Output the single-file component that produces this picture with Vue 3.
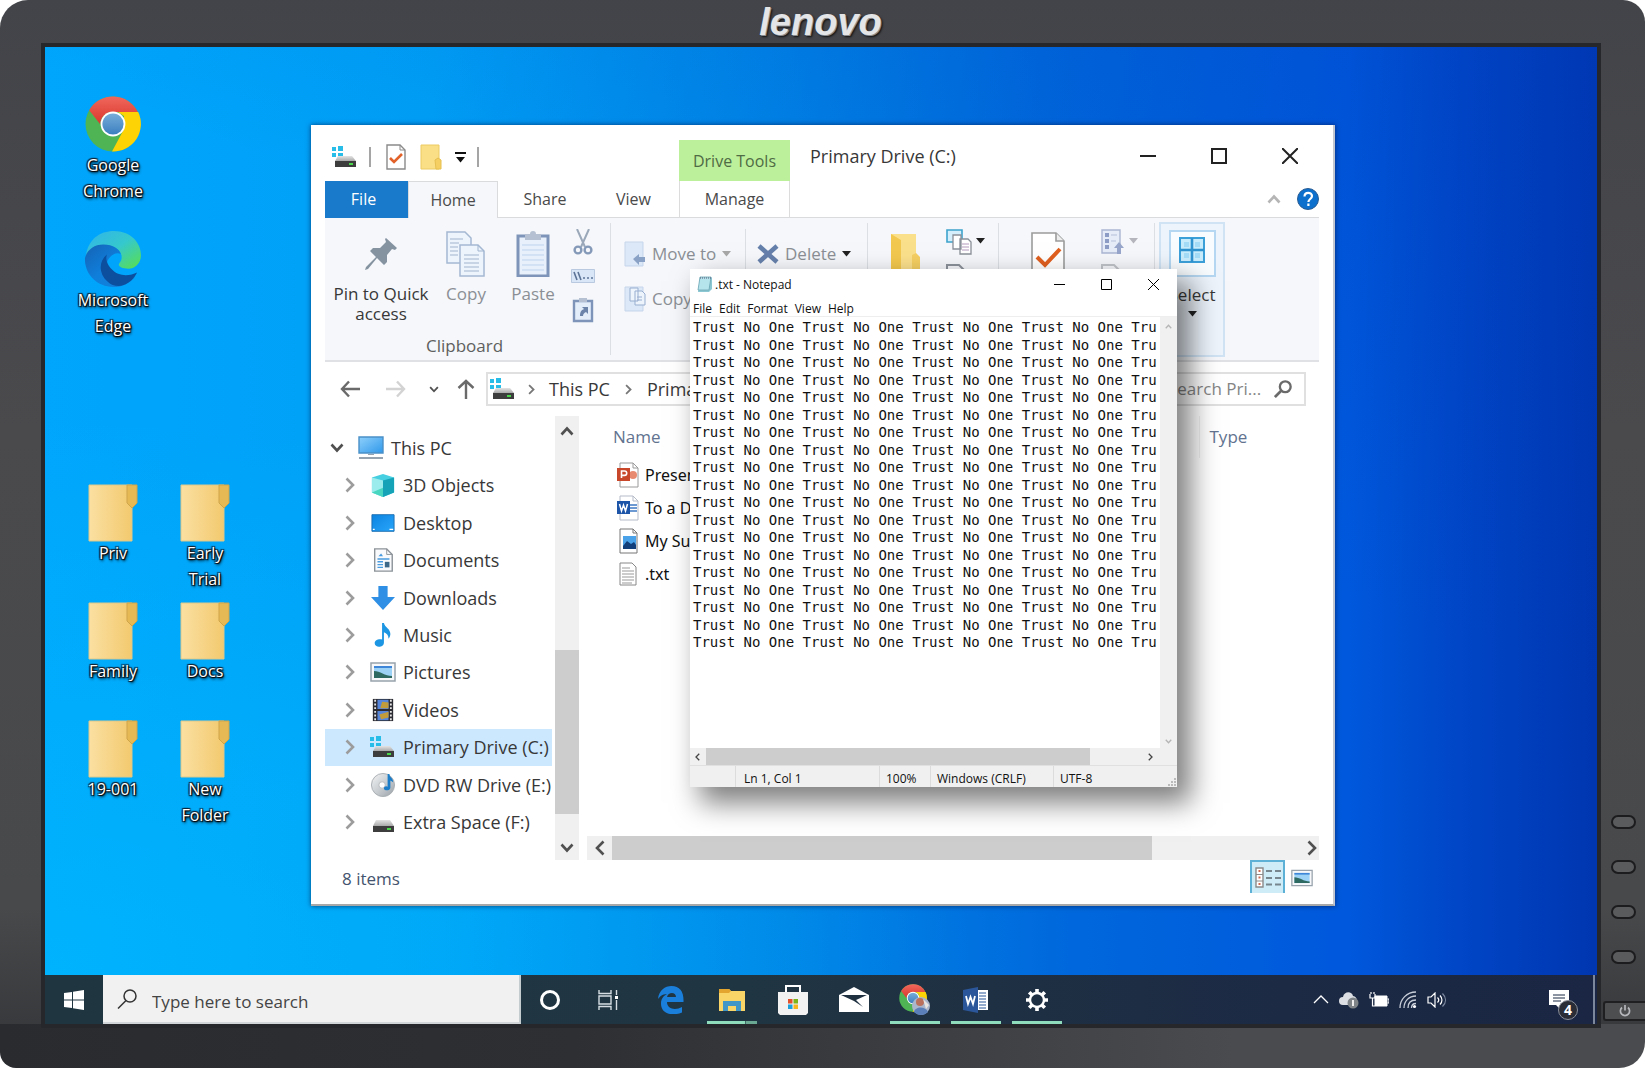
<script setup>
import { ref } from 'vue'

const shortcuts = [
  { label: 'Google\nChrome', icon: 'chrome' },
  { label: 'Microsoft\nEdge', icon: 'edge-new' },
]
const folders = ['Priv', 'Early\nTrial', 'Family', 'Docs', '19-001', 'New\nFolder']

const tree = [
  { label: 'This PC', icon: 'pc', root: true },
  { label: '3D Objects', icon: 'cube' },
  { label: 'Desktop', icon: 'desk' },
  { label: 'Documents', icon: 'docs' },
  { label: 'Downloads', icon: 'down' },
  { label: 'Music', icon: 'music' },
  { label: 'Pictures', icon: 'picture' },
  { label: 'Videos', icon: 'video' },
  { label: 'Primary Drive (C:)', icon: 'drive-win', active: true },
  { label: 'DVD RW Drive (E:)', icon: 'dvd' },
  { label: 'Extra Space (F:)', icon: 'drive' },
]

const files = [
  { name: 'Presentation', icon: 'f-ppt' },
  { name: 'To a Document', icon: 'f-word' },
  { name: 'My Summer', icon: 'f-img' },
  { name: '.txt', icon: 'f-txt' },
]

const line = 'Trust No One '.repeat(6).trim()
const note = ref(Array(19).fill(line).join('\n'))
const query = ref('')
const webQuery = ref('')

const apps = [
  { id: 'edge-old', name: 'Microsoft Edge' },
  { id: 'explorer', name: 'File Explorer', running: true, stacked: true },
  { id: 'store', name: 'Microsoft Store' },
  { id: 'mail', name: 'Mail' },
  { id: 'chrome-user', name: 'Google Chrome', running: true },
  { id: 'word', name: 'Word', running: true },
  { id: 'gear', name: 'Settings', running: true },
]
</script>

<template>
  <svg class="sprite" aria-hidden="true">
    <defs>
      <linearGradient id="gFolder" x1="0" x2="1" y1="0" y2="0"><stop offset="0" stop-color="#fbe0a2" /><stop offset="1" stop-color="#f2c96e" /></linearGradient>
      <linearGradient id="gRed" x1="0" x2="0" y1="0" y2="1"><stop offset="0" stop-color="#f0675c" /><stop offset="1" stop-color="#d9362b" /></linearGradient>
      <linearGradient id="gBlue" x1="0" x2="0" y1="0" y2="1"><stop offset="0" stop-color="#77add9" /><stop offset="1" stop-color="#3b7fc0" /></linearGradient>
      <linearGradient id="gTeal" x1="0" x2="1" y1="0" y2="1"><stop offset="0" stop-color="#2fb4ec" /><stop offset="0.5" stop-color="#35c8cd" /><stop offset="1" stop-color="#5be04a" /></linearGradient>
      <linearGradient id="gEdgeL" x1="0" x2="1" y1="0" y2="1"><stop offset="0" stop-color="#1563b4" /><stop offset="0.5" stop-color="#0f7fdc" /><stop offset="1" stop-color="#1180d8" /></linearGradient>
      <linearGradient id="gScreen" x1="0" x2="1" y1="0" y2="1"><stop offset="0" stop-color="#8fd0fb" /><stop offset="1" stop-color="#2f98ea" /></linearGradient>
      <linearGradient id="gDesk" x1="0" x2="1" y1="0" y2="1"><stop offset="0" stop-color="#0b83e0" /><stop offset="1" stop-color="#2aa6fb" /></linearGradient>
      <linearGradient id="gDrive" x1="0" x2="0" y1="0" y2="1"><stop offset="0" stop-color="#e4e4e4" /><stop offset="1" stop-color="#a9a9a9" /></linearGradient>
      <linearGradient id="gDisc" x1="0" x2="1" y1="0" y2="1"><stop offset="0" stop-color="#f4f4f4" /><stop offset="0.5" stop-color="#c9ced2" /><stop offset="1" stop-color="#9aa2a8" /></linearGradient>
    </defs>

    <symbol id="chrome" viewBox="0 0 56 56">
      <circle cx="28" cy="28" r="27.5" fill="#4fb454" />
      <path d="M4.2 14.2A27.5 27.5 0 0 1 52.8 16H28a12 12 0 0 0-12.6 12.5z" fill="url(#gRed)" />
      <path d="M53.2 16A27.5 27.5 0 0 1 27 55.4L38.5 34 39 20 33 16z" fill="#fdd305" />
      <circle cx="28" cy="28" r="12.4" fill="#fff" /><circle cx="28" cy="28" r="10.6" fill="url(#gBlue)" />
    </symbol>
    <symbol id="edge-new" viewBox="0 0 58 58">
      <path d="M1 26C3 9 15 0 30 0c17 0 28 12 28 25 0 9-7 14-13 14-6 0-10-2-10-4 0-2 3-3 3-8 0-6-6-11-14-12C14 14 5 18 1 26z" fill="url(#gTeal)" />
      <path d="M0 28C2 20 9 14 19 14c10 0 17 5 18 10-3-2-7-1-10 2-7 6-6 17 2 23 7 5 17 3 23-2C47 54 39 58 29 58 12 58-1 44 0 28z" fill="url(#gEdgeL)" />
      <path d="M23 24c-9 7-9 20 0 28 5 5 12 6 17 4 6-2 11-7 14-13-8 4-20 4-26-3-6-6-7-13-5-16z" fill="#0c4f9e" />
    </symbol>
    <symbol id="folder-big" viewBox="0 0 50 58">
      <path d="M1 1h43v56H1z" fill="url(#gFolder)" stroke="#dcc88c" stroke-width="1" />
      <path d="M39 1h10v18l-5 5-5-5z" fill="#e6b954" stroke="#cfa54a" stroke-width="1" />
    </symbol>

    <symbol id="drive-win" viewBox="0 0 26 22">
      <path d="M0 1h4v4H0zM6 0h5v5H6zM0 7h4v4H0zM6 7h5v4H6z" fill="#28bce8" />
      <path d="M6 10h14l4 5H3z" fill="url(#gDrive)" /><path d="M3 15h21v6H3z" fill="#3d3d3d" /><path d="M17 17h4v2h-4z" fill="#4ad84a" />
    </symbol>
    <symbol id="drive" viewBox="0 0 26 22">
      <path d="M6 9h14l4 6H3z" fill="url(#gDrive)" /><path d="M3 15h21v6H3z" fill="#3d3d3d" /><path d="M17 17h4v2h-4z" fill="#4ad84a" />
    </symbol>
    <symbol id="doc-check" viewBox="0 0 20 26">
      <path d="M1 1h13l5 5v19H1z" fill="#fff" stroke="#8a8a8a" stroke-width="1.4" /><path d="M14 1v5h5" fill="none" stroke="#8a8a8a" />
      <path d="M4 14l4 4 8-8" fill="none" stroke="#e2622a" stroke-width="2.6" />
    </symbol>
    <symbol id="folder-s" viewBox="0 0 22 26">
      <path d="M1 1h18v24H1z" fill="#fbdf87" stroke="#eccb62" /><path d="M15 16l3-2 3 2v9h-5z" fill="#f6cf62" stroke="#e6c050" />
    </symbol>
    <symbol id="pin" viewBox="0 0 32 33">
      <path d="M21 0l11 10-2 2-3-1-5 6 0 7-3 3-7-7-9 11-3 1 1-3 10-10-6-6 3-3 7 0 6-6-1-3z" fill="#8593a1" />
    </symbol>
    <symbol id="copy" viewBox="0 0 40 46">
      <g fill="#eef4fc" stroke="#a5b8d2" stroke-width="1.5">
        <path d="M1 1h18l6 6v25H1z" /><path d="M14 14h18l6 6v25H14z" />
      </g>
      <path d="M4 8h13M4 12h9M4 16h8M4 20h8M4 24h8M18 24h15M18 28h15M18 32h15M18 36h15M18 40h15M32 14v6h6" stroke="#9fb4d0" fill="none" />
    </symbol>
    <symbol id="paste" viewBox="0 0 34 46">
      <path d="M2 5h30v40H2z" fill="#e8f0fb" stroke="#7e94b8" stroke-width="3" /><path d="M9 3h5a3 3 0 0 1 6 0h5v6H9z" fill="#b5c1d2" />
      <path d="M6 14h22M6 19h22M6 24h22M6 29h22M6 34h22M6 39h22" stroke="#bfd3ef" />
    </symbol>
    <symbol id="cut" viewBox="0 0 20 26">
      <path d="M4 0l8 18M16 0L8 18" stroke="#9aa8ba" stroke-width="2" /><g fill="none" stroke="#8499b8" stroke-width="2.4"><circle cx="5" cy="21" r="3.4" /><circle cx="15" cy="21" r="3.4" /></g>
    </symbol>
    <symbol id="path" viewBox="0 0 24 14">
      <path d="M.5.5h23v13H.5z" fill="#d8e6f8" stroke="#b8c9e0" /><path d="M3 3l3 8M7 3l3 8M12 9h2M16 9h2M20 9h2" stroke="#5c7396" stroke-width="1.6" />
    </symbol>
    <symbol id="shortcut" viewBox="0 0 22 26">
      <path d="M2 4h18v20H2z" fill="#e4eefb" stroke="#7e94b8" stroke-width="2.4" /><path d="M7 1h8v4H7z" fill="#b5c1d2" /><path d="M8 19c0-5 2-6 4-7l-2-2h6v7l-2-2c-2 1-3 2-3 4z" fill="#6c84aa" />
    </symbol>
    <symbol id="move" viewBox="0 0 22 26">
      <path d="M1 1h18v24H1z" fill="#dce8f8" stroke="#c5d5ea" /><path d="M9 18l6-5v3h6v5h-6v3z" fill="#8aa2c6" />
    </symbol>
    <symbol id="copyto" viewBox="0 0 22 26">
      <path d="M1 1h18v24H1z" fill="#dce8f8" stroke="#c5d5ea" /><path d="M6 2h8v13H6zM11 5h7l3 3v11H11z" fill="#eef4fc" stroke="#98aed0" /><path d="M13 11h5M13 14h5" stroke="#98aed0" />
    </symbol>
    <symbol id="cross" viewBox="0 0 22 20"><path d="M2 2l18 16M20 2L2 18" stroke="#6680ac" stroke-width="4.6" /></symbol>
    <symbol id="newfolder" viewBox="0 0 30 60">
      <path d="M1 1h25v58H1z" fill="#fbe08c" /><path d="M1 1l10 6v52H1z" fill="#f3c84e" /><path d="M22 22l4-2 4 4v35h-8z" fill="#f5cf62" />
    </symbol>
    <symbol id="newitem" viewBox="0 0 26 26">
      <path d="M1 1h15v12H1z" fill="#d5f0fc" stroke="#3da3cc" stroke-width="1.6" /><path d="M7 6h8v14H7zM14 10h8l3 3v12H14z" fill="#fff" stroke="#8a9099" stroke-width="1.3" /><path d="M16 15h7M16 18h7M16 21h7" stroke="#b49ac0" />
    </symbol>
    <symbol id="easy" viewBox="0 0 22 20"><path d="M1 7V2h12l6 6v12" fill="none" stroke="#8c929a" stroke-width="2" /><path d="M4 8h8v8H4z" fill="#b9c2cc" /></symbol>
    <symbol id="props" viewBox="0 0 34 46">
      <path d="M1 1h24l8 8v36H1z" fill="#fff" stroke="#9c9c9c" stroke-width="1.6" /><path d="M25 1v8h8" fill="#eee" stroke="#9c9c9c" stroke-width="1.6" /><path d="M6 25l8 8 15-16" fill="none" stroke="#e0601f" stroke-width="4" />
    </symbol>
    <symbol id="open" viewBox="0 0 24 26">
      <path d="M1 1h18v23H1z" fill="#e6ecf8" stroke="#aab6d2" stroke-width="1.4" /><path d="M4 4h4v4H4zM4 10h4v4H4zM4 16h4v4H4z" fill="#8c9cc4" /><path d="M10 6h6M10 12h5" stroke="#b5c0da" /><path d="M13 19l5-6 5 6h-3v6h-4v-6z" fill="#97a6ca" />
    </symbol>
    <symbol id="tiles" viewBox="0 0 26 26">
      <path d="M1 1h24v24H1z" fill="#c9ecfd" stroke="#3b9fd8" stroke-width="2" /><path d="M13 1v24M1 13h24" stroke="#2f93d0" stroke-width="2.6" />
      <path d="M5 5h5v5H5zM16 5h5v5h-5zM5 16h5v5H5zM16 16h5v5h-5z" fill="#a4dcf8" />
    </symbol>
    <symbol id="help" viewBox="0 0 22 22">
      <circle cx="11" cy="11" r="10.5" fill="#0c70cc" stroke="#2a5c94" /><path d="M7.5 8.5C7.5 3.5 15 4 15 8c0 3-3.6 3-3.600 6M11.400 15.600v2.400" stroke="#fff" stroke-width="2.200" fill="none" />
    </symbol>
    <symbol id="chev-r" viewBox="0 0 10 16"><path d="M1.500 1.500L8 8l-6.500 6.500" fill="none" stroke="currentColor" stroke-width="2.600" /></symbol>
    <symbol id="chev-d" viewBox="0 0 14 10"><path d="M1.500 1.500L7 7.500l5.500-6" fill="none" stroke="currentColor" stroke-width="2.600" /></symbol>
    <symbol id="arrow" viewBox="0 0 20 18"><path d="M9 1.500L2 9l7 7.500M2 9h18" fill="none" stroke="currentColor" stroke-width="2.400" /></symbol>
    <symbol id="tri" viewBox="0 0 9 6"><path d="M0 0h9L4.500 5.500z" fill="currentColor" /></symbol>
    <symbol id="lens" viewBox="0 0 20 20"><circle cx="12.500" cy="7.500" r="6" fill="none" stroke="currentColor" stroke-width="2.600" /><path d="M8 12l-7 7" stroke="currentColor" stroke-width="3" /></symbol>
    <symbol id="lens-thin" viewBox="0 0 20 20"><circle cx="13" cy="7" r="6" fill="none" stroke="currentColor" stroke-width="1.500" /><path d="M9 11.500l-8 8" stroke="currentColor" stroke-width="1.500" /></symbol>

    <symbol id="pc" viewBox="0 0 26 24"><path d="M1 1h24v16H1z" fill="url(#gScreen)" stroke="#4a90c8" stroke-width="1.400" /><path d="M10 18h6v1h-6zM1 21h24v2H1z" fill="#95a3b0" /></symbol>
    <symbol id="cube" viewBox="0 0 26 26"><path d="M1 5l12-4 12 4v16l-12 5-12-5z" fill="#46cfe0" /><path d="M1 5l12 3v18L1 21z" fill="#9becec" /><path d="M13 8l12-3v16l-12 5z" fill="#15a3b8" /><path d="M1 21l12-5 0 10z" fill="#48d6c0" /></symbol>
    <symbol id="desk" viewBox="0 0 26 26"><path d="M1 4h24v18H1z" fill="url(#gDesk)" stroke="#1c6cb0" /><path d="M2 20h2M20 20h4" stroke="#fff" stroke-width="1.400" /></symbol>
    <symbol id="docs" viewBox="0 0 26 26"><path d="M4 1h13l6 6v18H4z" fill="#f8fafc" stroke="#8b9298" stroke-width="1.500" /><path d="M17 1v6h6" fill="none" stroke="#8b9298" /><path d="M8 9l3-3 2 3z" fill="#4a9ce0" /><path d="M7 12h13M7 15h6M7 18h6M7 21h6" stroke="#4a9ce0" stroke-width="1.600" /><path d="M15 15h5v6h-5z" fill="#3e6888" /></symbol>
    <symbol id="down" viewBox="0 0 26 26"><path d="M8 0h10v12h8L13 26 0 12h8z" fill="#2f8fe4" /></symbol>
    <symbol id="music" viewBox="0 0 26 26"><path d="M12 0h2c1 5 7 6 7 12 0 2-1 4-2 5 0-4-2-6-5-7v11c0 6-10 6-10 1 0-4 5-5 8-4z" fill="#1c96e2" /></symbol>
    <symbol id="picture" viewBox="0 0 26 20"><path d="M1 1h24v18H1z" fill="#f6f8fa" stroke="#98a2ac" stroke-width="1.500" /><path d="M4 4h18v12H4z" fill="#9cd2f5" /><path d="M4 4h18v2H4z" fill="#3d86d8" /><path d="M4 9c6 0 11 5 18 5v2H4z" fill="#2f6a62" /></symbol>
    <symbol id="video" viewBox="0 0 26 26"><path d="M2 1h22v24H2z" fill="#2b2b33" /><path d="M7 2h12v10H7zM7 14h12v10H7z" fill="#5686dc" /><path d="M12 4l7 1v6H10zM9 18l10-3v6l-8 2z" fill="#c29c3a" /><path d="M4.500 2v23M21.500 2v23" stroke="#e8e8e8" stroke-width="2" stroke-dasharray="2 2" /></symbol>
    <symbol id="dvd" viewBox="0 0 26 26"><circle cx="13" cy="13" r="12.500" fill="url(#gDisc)" stroke="#a8aeb2" /><circle cx="12" cy="13" r="3.500" fill="#fff" stroke="#b5babd" /><path d="M18 1h2c0 4 4 4 4 9l-3-2v8c0 3-6 4-7 1 0-3 3-3 4-2z" fill="#1b7cc8" /></symbol>

    <symbol id="f-ppt" viewBox="0 0 22 26"><path d="M3 1h13l5 5v19H3z" fill="#fff" stroke="#9a9a9a" /><path d="M16 1v5h5" fill="none" stroke="#9a9a9a" /><circle cx="16" cy="13" r="4" fill="#e88a70" /><path d="M0 6h13v13H0z" fill="#c8472a" /><path d="M4.500 16V9h3a2 2 0 0 1 0 4.400h-3" fill="none" stroke="#fff" stroke-width="1.600" /></symbol>
    <symbol id="f-word" viewBox="0 0 22 26"><path d="M3 1h13l5 5v19H3z" fill="#fff" stroke="#b5bcc8" /><path d="M16 1v5h5" fill="none" stroke="#b5bcc8" /><path d="M12 10h8M12 13h8M12 16h8" stroke="#3d78c4" stroke-width="1.400" /><path d="M0 6h13v13H0z" fill="#1d55a8" /><path d="M2.500 9l2 7 2-6 2 6 2-7" fill="none" stroke="#fff" stroke-width="1.500" /></symbol>
    <symbol id="f-img" viewBox="0 0 22 26"><path d="M3 1h13l4 4v20H3z" fill="#fff" stroke="#777" /><path d="M16 1v4h4" fill="none" stroke="#777" /><path d="M6 8h13v13H6z" fill="#4aa3e8" /><path d="M6 18l4-5 4 3 3-2 2 3v4H6z" fill="#123f7a" /></symbol>
    <symbol id="f-txt" viewBox="0 0 22 26"><path d="M3 2h12l4 4v18H3z" fill="#fff" stroke="#888" /><path d="M5 7h8M5 10h12M5 13h12M5 16h12M5 19h12M5 22h10" stroke="#999" /></symbol>
    <symbol id="notepad" viewBox="0 0 16 17"><path d="M3 1h11l1 1v11l-3 3H1z" fill="#8cc8d4" /><path d="M3 1h11l-2 13H1z" fill="#b6e4ec" stroke="#6ba4b2" stroke-width=".8" /><path d="M3 2h11" stroke="#557" stroke-dasharray="1 1" /></symbol>
    <symbol id="details" viewBox="0 0 26 22"><path d="M1 1h7v19H1z" fill="#fff" stroke="#8a8a8a" stroke-width="1.400" /><path d="M1 7.500h7M1 14h7" stroke="#8a8a8a" /><path d="M3.500 4h2M3.500 10.500h2M3.500 17h2" stroke="#d06a50" stroke-width="2" /><path d="M11 4h6M20 4h6M11 11h6M20 11h6M11 17.500h6M20 17.500h6" stroke="#77858c" stroke-width="2" /></symbol>

    <symbol id="start" viewBox="0 0 20 20"><path d="M0 3l8-1v7.500H0zM9 1.800L20 0v9.500H9zM0 10.500h8V18l-8-1zM9 10.500h11V20L9 18.200z" fill="#fff" /></symbol>
    <symbol id="taskview" viewBox="0 0 20 20"><g fill="none" stroke="#d5dde2" stroke-width="1.400"><path d="M1 0v3.500h12V0M1 6h12v8H1zM1 20v-3.500h12V20M18.500 0v5M18.500 10v10" /></g><path d="M17 6h3v3h-3z" fill="#fff" /></symbol>
    <symbol id="edge-old" viewBox="0 0 26 28"><path fill-rule="evenodd" d="M0 13C1 4 7 0 13.500 0 22 0 26 6 25.500 16H9c0 7.500 9 8.500 15 5v5.500C14 30.500 3 28 3 17.500 3 12.500 6 9.500 9 8c-5 0-7.500 3-9 5zm9-2h9c0-5.500-8-5.500-9 0z" fill="#1a7fdb" /></symbol>
    <symbol id="explorer" viewBox="0 0 28 24"><path d="M1 1h10l2 2h14v20H1z" fill="#f9d568" /><path d="M1 1h10l2 2-2 2H1z" fill="#e3a52e" /><path d="M5 13h18v10h-5v-5h-8v5H5z" fill="#4196c8" /></symbol>
    <symbol id="store" viewBox="0 0 30 30"><path d="M8 8V1h14v7" fill="none" stroke="#fff" stroke-width="2" /><path d="M0 7h30v21l-2 2H2l-2-2z" fill="#f2f2f2" /><path d="M10 14h4.500v4.500H10z" fill="#e2502c" /><path d="M15.500 14H20v4.500h-4.500z" fill="#7bb518" /><path d="M10 19.500h4.500V24H10z" fill="#1ba0dc" /><path d="M15.500 19.500H20V24h-4.500z" fill="#f6b61c" /></symbol>
    <symbol id="mail" viewBox="0 0 30 25"><path d="M0 8l15-8 15 8v17H0z" fill="#fff" /><path d="M2 8h26l-11 5 7 7-9-6z" fill="#1f3040" /></symbol>
    <symbol id="chrome-user" viewBox="0 0 32 32"><use href="#chrome" width="28" height="28" /><circle cx="22" cy="22" r="9" fill="#a9b6cc" /><circle cx="21" cy="18" r="4" fill="#b9705c" /><path d="M15 28c1-6 12-6 14 0-4 4-10 4-14 0z" fill="#5b7fb8" /><path d="M24 15l6 6-3 4z" fill="#e8e4e0" /></symbol>
    <symbol id="word" viewBox="0 0 26 26"><path d="M14 3h11v20H14z" fill="#fff" /><path d="M16 6h7M16 9h7M16 12h7M16 15h7M16 18h7M16 21h7" stroke="#2b579a" stroke-width="1.200" /><path d="M0 3l15-3v26L0 23z" fill="#2b579a" /><path d="M3 9l2 8 2.500-7 2.500 7 2-8" fill="none" stroke="#fff" stroke-width="1.800" /></symbol>
    <symbol id="gear" viewBox="0 0 24 24"><circle cx="12" cy="12" r="7" fill="none" stroke="#fff" stroke-width="2.400" /><path d="M12 1v4M12 19v4M1 12h4M19 12h4M4.200 4.200l2.900 2.900M16.900 16.900l2.900 2.900M4.200 19.800l2.900-2.900M16.900 7.100l2.900-2.900" stroke="#fff" stroke-width="3.600" /></symbol>
    <symbol id="cloud" viewBox="0 0 20 18"><path d="M4 14a4 4 0 0 1 0-8c1-6 9-6 10-1 5 0 5 9 0 9z" fill="#dcdfe3" /><circle cx="14" cy="12" r="5.500" fill="#7e8488" /><path d="M14 9v6" stroke="#eee" stroke-width="2" /></symbol>
    <symbol id="battery" viewBox="0 0 20 16"><path d="M6 4h12v10H6z" fill="#fff" stroke="#fff" /><path d="M18.500 7h1.500v4h-1.500M1 2v4h5V2M2 0v2M5 0v2M3.500 6v8H6" fill="none" stroke="#fff" stroke-width="1.200" /></symbol>
    <symbol id="wifi" viewBox="0 0 18 18"><g fill="none" stroke="#c8ced8" stroke-width="1.300"><path d="M1 17C1 8 8 1 17 1M5 17c0-7 5-12 12-12M9 17c0-5 3-8 8-8M12.500 17c0-3 1.500-4.500 4.500-4.500" /></g><circle cx="15.500" cy="15.500" r="1.600" fill="#fff" /></symbol>
    <symbol id="sound" viewBox="0 0 20 16"><g fill="none" stroke="#fff" stroke-width="1.200"><path d="M1 5h3l4-4v14l-4-4H1zM10.500 5.500c1.500 1.500 1.500 3.500 0 5M13 3.500c2.600 2.600 2.600 6.400 0 9" /><path d="M15.500 1.500c4 4 4 9 0 13" stroke="#7f8aa0" /></g></symbol>
    <symbol id="notice" viewBox="0 0 20 20"><path d="M0 0h20v15H12v5l-5-5H0z" fill="#fff" /><path d="M4 5h12M4 8h12M4 11h8" stroke="#1a2845" /></symbol>
    <symbol id="power" viewBox="0 0 12 12"><path d="M3 2.500a4.600 4.600 0 1 0 6 0M6 0v5.500" fill="none" stroke="#b5b7ba" stroke-width="1.700" /></symbol>
  </svg>

  <div class="monitor">
    <header class="brand"><span class="logo">lenovo</span></header>

    <main class="screen">
      <div class="desktop">
        <div class="shortcuts apps">
          <a v-for="s in shortcuts" :key="s.icon" href="#" class="shortcut">
            <svg class="app-icon"><use :href="'#' + s.icon" /></svg>
            <span>{{ s.label }}</span>
          </a>
        </div>
        <div class="shortcuts folders">
          <a v-for="f in folders" :key="f" href="#" class="shortcut">
            <svg class="folder-icon"><use href="#folder-big" /></svg>
            <span>{{ f }}</span>
          </a>
        </div>

        <section class="window explorer" aria-label="Primary Drive (C:)">
          <div class="titlebar">
            <div class="quick">
              <svg class="i26x22"><use href="#drive-win" /></svg>
              <i class="bar"></i>
              <button aria-label="Properties"><svg class="i20x26"><use href="#doc-check" /></svg></button>
              <button aria-label="New folder"><svg class="i22x26"><use href="#folder-s" /></svg></button>
              <button class="customize" aria-label="Customize"><i></i><svg class="tri"><use href="#tri" /></svg></button>
              <i class="bar"></i>
            </div>
            <div class="context">Drive Tools</div>
            <h1>Primary Drive (C:)</h1>
            <div class="controls">
              <button aria-label="Minimize"><svg viewBox="0 0 16 16"><path d="M0 8h16" stroke="#222" stroke-width="2" /></svg></button>
              <button aria-label="Maximize"><svg viewBox="0 0 16 16"><path d="M1 1h14v14H1z" fill="none" stroke="#222" stroke-width="2" /></svg></button>
              <button aria-label="Close"><svg viewBox="0 0 16 16"><path d="M0 0l16 16M16 0L0 16" stroke="#222" stroke-width="2" /></svg></button>
            </div>
          </div>

          <nav class="tabs">
            <button class="tab file">File</button>
            <button class="tab home">Home</button>
            <button class="tab share">Share</button>
            <button class="tab view">View</button>
            <button class="tab manage">Manage</button>
            <span class="grow"></span>
            <button class="fold" aria-label="Collapse ribbon"><svg class="chev up"><use href="#chev-d" /></svg></button>
            <button aria-label="Help"><svg class="i22"><use href="#help" /></svg></button>
          </nav>

          <div class="ribbon">
            <div class="group clipboard">
              <div class="tools">
                <button class="tool pin"><svg class="pic-pin"><use href="#pin" /></svg>Pin to Quick<br />access</button>
                <button class="tool copy dim"><svg class="pic-copy"><use href="#copy" /></svg>Copy</button>
                <button class="tool paste dim"><svg class="pic-paste"><use href="#paste" /></svg>Paste</button>
                <div class="minis">
                  <button aria-label="Cut"><svg class="i20x26"><use href="#cut" /></svg></button>
                  <button aria-label="Copy path"><svg class="i24x14"><use href="#path" /></svg></button>
                  <button aria-label="Paste shortcut"><svg class="i22x26"><use href="#shortcut" /></svg></button>
                </div>
              </div>
              <div class="caption">Clipboard</div>
            </div>
            <div class="group organize">
              <div class="stack">
                <button class="row dim"><svg class="i22x26"><use href="#move" /></svg>Move to <svg class="tri"><use href="#tri" /></svg></button>
                <button class="row dim"><svg class="i22x26"><use href="#copyto" /></svg>Copy to</button>
              </div>
              <div class="stack del">
                <button class="row dim"><svg class="i22x20"><use href="#cross" /></svg>Delete <svg class="tri black"><use href="#tri" /></svg></button>
              </div>
            </div>
            <div class="group new">
              <button aria-label="New folder"><svg class="pic-new"><use href="#newfolder" /></svg></button>
              <div class="duo">
                <button aria-label="New item"><svg class="i26"><use href="#newitem" /></svg><svg class="tri black"><use href="#tri" /></svg></button>
                <button aria-label="Easy access"><svg class="i22x20"><use href="#easy" /></svg></button>
              </div>
            </div>
            <div class="group opening">
              <button aria-label="Properties"><svg class="pic-props"><use href="#props" /></svg></button>
              <div class="duo">
                <button aria-label="Open"><svg class="i24x26"><use href="#open" /></svg><svg class="tri grey"><use href="#tri" /></svg></button>
                <button aria-label="Edit" class="faded"><svg class="i22x20"><use href="#easy" /></svg></button>
              </div>
            </div>
            <button class="select"><span class="frame"><svg class="i26"><use href="#tiles" /></svg></span>Select<svg class="tri black"><use href="#tri" /></svg></button>
          </div>

          <div class="address">
            <button class="nav wide" aria-label="Back"><svg class="arrow"><use href="#arrow" /></svg></button>
            <button class="nav wide off" aria-label="Forward"><svg class="arrow flip"><use href="#arrow" /></svg></button>
            <button class="nav mid" aria-label="Recent"><svg class="chev tiny"><use href="#chev-d" /></svg></button>
            <button class="nav upper" aria-label="Up"><svg class="arrow turn"><use href="#arrow" /></svg></button>
            <div class="crumbs">
              <svg class="i26x22"><use href="#drive-win" /></svg>
              <svg class="sep"><use href="#chev-r" /></svg><a href="#">This PC</a>
              <svg class="sep"><use href="#chev-r" /></svg><a href="#">Primary Drive (C:)</a>
            </div>
            <label class="find">
              <input v-model="query" type="text" placeholder="Search Pri..." aria-label="Search Primary Drive" />
              <svg class="i18"><use href="#lens" /></svg>
            </label>
          </div>

          <div class="body">
            <ul class="tree">
              <li v-for="n in tree" :key="n.label" :class="{ root: n.root, active: n.active }">
                <svg v-if="n.root" class="chev"><use href="#chev-d" /></svg>
                <svg v-else class="twist"><use href="#chev-r" /></svg>
                <svg class="node"><use :href="'#' + n.icon" /></svg>
                <a href="#">{{ n.label }}</a>
              </li>
            </ul>
            <div class="vscroll">
              <svg class="chev up"><use href="#chev-d" /></svg>
              <i></i>
              <svg class="chev"><use href="#chev-d" /></svg>
            </div>
            <div class="list">
              <table>
                <thead><tr><th class="name">Name</th><th class="type">Type</th></tr></thead>
                <tbody>
                  <tr v-for="f in files" :key="f.name">
                    <td><span class="entry"><svg class="i22x26"><use :href="'#' + f.icon" /></svg>{{ f.name }}</span></td><td></td>
                  </tr>
                </tbody>
              </table>
              <div class="hscroll">
                <svg class="twist back"><use href="#chev-r" /></svg>
                <i></i>
                <svg class="twist"><use href="#chev-r" /></svg>
              </div>
            </div>
          </div>

          <footer class="status">
            <span>8 items</span>
            <button class="details" aria-label="Details"><svg class="i26x22"><use href="#details" /></svg></button>
            <button class="thumbs" aria-label="Large icons"><svg class="i22x18"><use href="#picture" /></svg></button>
          </footer>
        </section>

        <section class="window notepad" aria-label=".txt - Notepad">
          <div class="np-title">
            <svg class="i16"><use href="#notepad" /></svg><h2>.txt - Notepad</h2>
            <div class="np-controls">
              <button aria-label="Minimize"><svg viewBox="0 0 11 11"><path d="M0 5.500h11" stroke="#000" /></svg></button>
              <button aria-label="Maximize"><svg viewBox="0 0 11 11"><path d="M.5.500h10v10h-10z" fill="none" stroke="#000" /></svg></button>
              <button aria-label="Close"><svg viewBox="0 0 11 11"><path d="M0 0l11 11M11 0L0 11" stroke="#000" /></svg></button>
            </div>
          </div>
          <div class="np-menu">
            <button>File</button><button>Edit</button><button>Format</button><button>View</button><button>Help</button>
          </div>
          <div class="np-body">
            <textarea v-model="note" wrap="off" spellcheck="false" aria-label="Text"></textarea>
            <div class="np-v"><svg class="small up"><use href="#chev-d" /></svg><svg class="small"><use href="#chev-d" /></svg></div>
          </div>
          <div class="np-h"><svg class="thin back"><use href="#chev-r" /></svg><i></i><svg class="thin"><use href="#chev-r" /></svg></div>
          <div class="np-status">
            <span class="s0"></span><span class="s1">Ln 1, Col 1</span><span class="s2">100%</span><span class="s3">Windows (CRLF)</span><span class="s4">UTF-8</span>
            <svg class="grip" viewBox="0 0 8 8"><path d="M6 0h2v2H6zM3 3h2v2H3zM6 3h2v2H6zM0 6h2v2H0zM3 6h2v2H3zM6 6h2v2H6z" fill="#bbb" /></svg>
          </div>
        </section>
      </div>

      <nav class="taskbar">
        <button class="start" aria-label="Start"><svg class="i20"><use href="#start" /></svg></button>
        <label class="search">
          <svg class="i20"><use href="#lens-thin" /></svg>
          <input v-model="webQuery" type="text" placeholder="Type here to search" aria-label="Search" />
        </label>
        <button class="slot" aria-label="Cortana"><i class="ring"></i></button>
        <button class="slot" aria-label="Task view"><svg class="i20"><use href="#taskview" /></svg></button>
        <div class="pinned">
          <button v-for="a in apps" :key="a.id" :class="['app', { running: a.running, stacked: a.stacked }]" :aria-label="a.name">
            <svg :class="'t-' + a.id"><use :href="'#' + a.id" /></svg>
          </button>
        </div>
        <div class="tray">
          <svg class="caret" viewBox="0 0 16 9"><path d="M1 8l7-7 7 7" fill="none" stroke="#fff" stroke-width="1.300" /></svg>
          <svg class="i20x18"><use href="#cloud" /></svg>
          <svg class="i20x16"><use href="#battery" /></svg>
          <svg class="i18"><use href="#wifi" /></svg>
          <svg class="i20x16"><use href="#sound" /></svg>
        </div>
        <button class="notices" aria-label="Notifications"><svg class="i20"><use href="#notice" /></svg><b>4</b></button>
        <i class="peek"></i>
      </nav>
    </main>

    <aside class="side">
      <button v-for="n in 4" :key="n" class="key" :aria-label="'Monitor button ' + n"></button>
      <button class="power" aria-label="Power"><svg class="i12"><use href="#power" /></svg></button>
    </aside>
  </div>
</template>

<style>
body {
  margin: 0;
  background: #fff;
}
</style>

<style scoped>
.sprite {
  position: absolute;
  width: 0;
  height: 0;
}
* {
  box-sizing: border-box;
}
svg {
  display: block;
  flex: none;
}
button {
  padding: 0;
  border: 0;
  background: none;
  font: inherit;
  color: inherit;
}
a {
  color: inherit;
  text-decoration: none;
}
h1,
h2 {
  margin: 0;
  font-weight: 400;
}
.grow {
  flex: 1;
}
.i12 { width: 12px; height: 12px; }
.i16 { width: 16px; height: 17px; }
.i18 { width: 18px; height: 18px; }
.i20 { width: 20px; height: 20px; }
.i22 { width: 22px; height: 22px; }
.i26 { width: 26px; height: 26px; }
.i20x16 { width: 20px; height: 16px; }
.i20x18 { width: 20px; height: 18px; }
.i20x26 { width: 20px; height: 26px; }
.i22x18 { width: 22px; height: 18px; }
.i22x20 { width: 22px; height: 20px; }
.i22x26 { width: 22px; height: 26px; }
.i24x14 { width: 24px; height: 14px; }
.i24x26 { width: 24px; height: 26px; }
.i26x22 { width: 26px; height: 22px; }
.tri { width: 9px; height: 6px; color: #a8a8a8; }
.tri.black { color: #222; }
.tri.grey { color: #b5b5bd; }
.chev { width: 14px; height: 10px; color: #505050; }
.up { transform: rotate(180deg); }
.back { transform: rotate(180deg); }
.twist { width: 10px; height: 16px; color: #9c9c9c; }

.monitor {
  display: grid;
  grid-template: 47px 1fr 44px / 45px 1fr 48px;
  min-height: 100vh;
  border-radius: 28px 22px 26px 16px;
  background:
    linear-gradient(90deg, #2a2b2f 0, #2e2f33 35%, #4a4b4e 75%, #4a4b4e 100%) bottom / 100% 44px no-repeat,
    linear-gradient(180deg, #434449 0, #4a4a4d 40%, #48494b 85%, #333437 100%);
  font-family: "Open Sans", "Noto Sans", sans-serif;
}
.brand {
  grid-column: 1 / -1;
  display: flex;
  justify-content: center;
  align-items: center;
  height: 44px;
  padding-right: 4px;
}
.logo {
  color: #e4e5e7;
  font: italic 700 38px/42px "Liberation Sans", sans-serif;
  text-shadow: 1px 1px 0 #8a8b8e, 2px 2px 2px #111;
}
.screen {
  grid-column: 2;
  display: flex;
  flex-direction: column;
  min-width: 0;
  box-shadow: 0 0 0 4px #26272b;
}
.desktop {
  position: relative;
  flex: 1;
  overflow: hidden;
  background:
    linear-gradient(22deg, transparent 58%, rgba(0, 60, 190, 0.25) 100%),
    radial-gradient(ellipse 60% 60% at 0 100%, rgba(0, 192, 255, 0.5), transparent),
    linear-gradient(90deg, #00a6fc 0, #00a0f6 25%, #0084e6 48%, #0068dc 66%, #0058dc 84%, #0044c4 92%, #0036b0 100%);
}

.shortcuts {
  position: absolute;
  left: 22px;
  display: grid;
}
.apps {
  top: 49px;
  grid-auto-rows: 135px;
}
.folders {
  top: 437px;
  grid-template-columns: 92px 92px;
  grid-auto-rows: 118px;
}
.shortcut {
  display: flex;
  flex-direction: column;
  align-items: center;
  width: 92px;
  color: #fff;
  font-size: 16px;
  line-height: 26px;
  text-align: center;
  white-space: pre-line;
  text-shadow: 1px 1px 1px #000, -1px -1px 1px #123, 1px -1px 1px #123, -1px 1px 1px #123, 1px 2px 3px #000;
}
.app-icon { width: 56px; height: 56px; }
.folder-icon { width: 50px; height: 58px; }
.folders span { margin-top: -2px; }

.window {
  position: absolute;
  display: flex;
  flex-direction: column;
  background: #fff;
}
.explorer {
  left: 266px;
  right: 262px;
  top: 78px;
  padding: 0 14px;
  border-right: 2px solid #c3c8d0;
  border-bottom: 2px solid #a8a8a8;
  box-shadow: 0 0 5px rgba(0, 20, 70, 0.7);
  font-size: 18px;
  color: #383838;
}
.titlebar {
  display: flex;
  height: 56px;
}
.quick {
  display: flex;
  align-items: center;
  width: 354px;
  padding: 8px 0 0 7px;
}
.quick > button { margin-left: 14px; }
.quick > .bar {
  width: 2px;
  height: 20px;
  margin-left: 11px;
  background: #a5a5a5;
}
.quick > .bar + button { margin-left: 15px; }
.quick > .customize {
  display: flex;
  flex-direction: column;
  align-items: center;
  gap: 3px;
  margin-left: 13px;
}
.customize i { width: 11px; height: 2px; background: #111; }
.customize .tri { color: #111; }
.context {
  align-self: flex-end;
  width: 111px;
  height: 41px;
  background: #bdf09a;
  color: #4f6b45;
  font-size: 16px;
  line-height: 42px;
  text-align: center;
}
h1 {
  margin-left: 20px;
  font-size: 18px;
  line-height: 62px;
}
.controls {
  display: flex;
  align-items: center;
  margin: 6px 9px 0 auto;
}
.controls button {
  display: grid;
  place-items: center;
  width: 71px;
  height: 40px;
}
.controls button:last-child { margin-right: -15px; }
.controls svg { width: 16px; height: 16px; }

.tabs {
  display: flex;
  align-items: center;
  height: 37px;
  border-bottom: 1px solid #dadbdc;
  font-size: 16px;
  color: #4a4a4a;
}
.tab { height: 37px; line-height: 36px; }
.file { width: 83px; padding-right: 6px; background: #1979ca; color: #fff; }
.home { width: 90px; border: 1px solid #dadbdc; border-bottom: 0; background: #f5f7fa; }
.share { width: 94px; }
.view { width: 83px; }
.manage {
  width: 111px;
  margin-left: 4px;
  border: solid #dcdcdc;
  border-width: 0 1px;
}
.fold { margin-right: 16px; }
.fold .chev { color: #b5b5b5; }

.ribbon {
  display: flex;
  height: 144px;
  border-bottom: 2px solid #dfe1e4;
  background: #f5f7fa;
  font-size: 17px;
  line-height: 20px;
}
.group {
  display: flex;
  margin: 5px 0;
  padding-top: 6px;
  border-right: 1px solid #dcdfe4;
}
.clipboard { flex-direction: column; width: 286px; }
.tools { display: flex; }
.tool {
  display: flex;
  flex-direction: column;
  align-items: center;
  height: 100px;
}
.pin { width: 112px; }
.copy { width: 58px; }
.paste { width: 76px; }
.dim { color: #8b8f95; }
.pic-pin { width: 32px; height: 33px; margin: 9px 0 13px; }
.pic-copy { width: 40px; height: 46px; margin: 2px 0 7px; }
.pic-paste { width: 34px; height: 46px; margin: 2px 0 7px; }
.minis {
  display: flex;
  flex-direction: column;
  align-items: center;
  gap: 14px;
  width: 24px;
}
.caption { margin-top: 7px; padding-right: 6px; text-align: center; color: #5f5f5f; }
.organize { width: 257px; padding-left: 13px; }
.stack {
  display: flex;
  flex-direction: column;
  gap: 19px;
  width: 121px;
  padding-top: 12px;
}
.row {
  display: flex;
  align-items: center;
  gap: 6px;
  height: 26px;
  white-space: nowrap;
}
.del { width: auto; padding-left: 11px; border-left: 1px solid #dcdfe4; }
.new { width: 131px; padding-left: 22px; }
.opening { width: 156px; padding-left: 32px; }
.new > button { height: 60px; margin-top: 4px; }
.opening > button { height: 46px; margin-top: 3px; }
.pic-new { width: 30px; height: 60px; }
.pic-props { width: 34px; height: 46px; }
.duo { display: flex; flex-direction: column; gap: 8px; margin-left: 26px; }
.opening .duo { margin-left: 36px; }
.duo button { display: flex; align-items: flex-start; gap: 4px; }
.duo .tri { margin-top: 9px; }
.faded { opacity: 0.5; }
.select {
  display: flex;
  flex-direction: column;
  align-items: center;
  width: 66px;
  margin: 4px 0 3px 4px;
  border: 2px solid #cfe3f5;
  background: #edf4fc;
}
.frame {
  display: grid;
  place-items: center;
  width: 47px;
  height: 47px;
  margin: 6px 0 8px;
  padding-bottom: 8px;
  border: 2px solid #b5d7f2;
  background: #f8fcff;
}
.select .tri { margin-top: 6px; }

.address {
  display: flex;
  align-items: center;
  height: 54px;
  padding: 0 13px 0 2px;
}
.nav { display: grid; place-items: center; height: 30px; color: #6a6a6a; }
.wide { width: 46px; }
.mid { width: 30px; }
.upper { width: 34px; margin-right: 3px; }
.off { color: #d3d3d3; }
.arrow { width: 20px; height: 18px; }
.flip { transform: rotate(180deg); }
.turn { transform: rotate(90deg); }
.chev.tiny { width: 10px; height: 7px; }
.crumbs {
  display: flex;
  flex: 1;
  align-items: center;
  height: 34px;
  padding-left: 2px;
  border: 2px solid #e0e0e0;
}
.sep { width: 7px; height: 11px; margin: 0 14px 0 12px; color: #777; }
.crumbs a + .sep { margin: 0 15px; }
.find {
  display: flex;
  align-items: center;
  width: 148px;
  height: 34px;
  margin-left: 10px;
  padding-left: 8px;
  border: 2px solid #e0e0e0;
  color: #6a6a6a;
}
.find input,
.search input {
  width: 106px;
  padding: 0;
  border: 0;
  outline: 0;
  background: none;
  font: 17px/24px "Open Sans", "Noto Sans", sans-serif;
  color: #555;
}
.find input::placeholder { color: #858585; opacity: 1; }

.body { display: flex; height: 444px; }
.tree {
  display: flex;
  flex-direction: column;
  width: 227px;
  height: 412px;
  margin: 13px 3px 0 0;
  padding: 0;
  list-style: none;
}
.tree li {
  display: flex;
  flex: 1;
  align-items: center;
  padding-left: 20px;
  white-space: nowrap;
}
.tree .root { padding-left: 5px; }
.tree .active { background: #cce8ff; }
.node { width: 26px; height: 24px; margin: 0 7px 0 15px; }
.root .node { margin: 0 7px 0 14px; }
.vscroll {
  display: flex;
  flex-direction: column;
  align-items: center;
  width: 24px;
  margin-right: 8px;
  padding: 10px 0 7px;
  background: #f0f0f0;
}
.vscroll i { width: 24px; height: 164px; margin: auto 0 29px; background: #cdcdcd; }
.list { display: flex; flex: 1; flex-direction: column; justify-content: space-between; min-width: 0; }
table { width: 100%; border-collapse: collapse; table-layout: fixed; }
th { height: 42px; padding: 0 0 2px; color: #627390; font-size: 17px; font-weight: 400; text-align: left; }
.name { width: 612px; padding-left: 26px; }
.type { padding-left: 10px; border-left: 1px solid #f0f0f0; }
td {
  height: 33px;
  padding: 0 0 0 30px;
  color: #111;
  font: 16px/22px "Noto Sans", sans-serif;
}
.entry { display: flex; align-items: center; gap: 6px; }
.hscroll { display: flex; align-items: center; height: 24px; padding: 0 2px 0 8px; background: #f0f0f0; }
.hscroll i { width: 540px; height: 24px; margin: 0 auto 0 7px; background: #cdcdcd; }
.hscroll .twist { color: #505050; }

.status { display: flex; height: 44px; padding: 0 6px 0 17px; color: #44546e; }
.status span { margin-right: auto; font-size: 17px; line-height: 38px; }
.details {
  display: grid;
  place-items: center;
  width: 35px;
  height: 33px;
  margin-right: 6px;
  border: 2px solid #5db1d6;
  border-bottom: 0;
  background: #cdecf8;
}
.thumbs { height: 35px; }

.notepad {
  left: 645px;
  top: 222px;
  width: 487px;
  box-shadow: 12px 14px 26px 2px rgba(0, 0, 0, 0.5);
  color: #111;
  font-size: 12px;
}
.np-title { display: flex; align-items: center; height: 30px; padding-left: 7px; }
h2 { margin-left: 2px; font-size: 12px; }
.np-controls { display: flex; margin-left: auto; }
.np-controls button { display: grid; place-items: center; width: 47px; height: 28px; }
.np-controls svg { width: 11px; height: 11px; }
.np-menu {
  display: flex;
  gap: 7px;
  height: 18px;
  padding-left: 3px;
  border-bottom: 1px solid #eee;
  line-height: 20px;
}
.np-body { display: flex; height: 431px; }
textarea {
  width: 467px;
  margin-right: 3px;
  padding: 2px 0 0 3px;
  border: 0;
  outline: 0;
  resize: none;
  overflow: hidden;
  background: #fff;
  color: #111;
  font: 14px/1.25 "DejaVu Sans Mono", monospace;
}
.np-v {
  display: flex;
  flex: 1;
  flex-direction: column;
  justify-content: space-between;
  align-items: center;
  padding: 7px 0 4px;
  background: #f0f0f0;
}
.small { width: 7px; height: 5px; color: #b5b5b5; }
.np-h { display: flex; align-items: center; height: 17px; padding: 0 24px 0 5px; background: #f0f0f0; }
.np-h i { width: 384px; height: 17px; margin: 0 auto 0 6px; background: #cdcdcd; }
.thin { width: 5px; height: 8px; color: #444; }
.np-status {
  display: flex;
  height: 22px;
  border-top: 1px solid #e0e0e0;
  background: #f0f0f0;
  line-height: 25px;
}
.np-status span { padding-left: 6px; border-right: 1px solid #dcdcdc; }
.np-status .s0 { width: 46px; }
.np-status .s1 { width: 144px; padding-left: 8px; }
.np-status .s2 { width: 51px; }
.np-status .s3 { width: 123px; }
.np-status .s4 { flex: 1; border: 0; }
.grip { width: 8px; height: 8px; margin: 12px 1px 0 0; }

.taskbar {
  display: flex;
  align-items: stretch;
  height: 49px;
  background: linear-gradient(90deg, #1f3640 0, #203542 45%, #1c2a44 80%, #1a2643 100%);
}
.start { display: grid; place-items: center; width: 58px; }
.search {
  display: flex;
  align-items: center;
  width: 418px;
  padding-left: 14px;
  border-right: 2px solid #c5ccd0;
  border-bottom: 2px solid #d3d6d8;
  background: #f1f1f1;
  color: #333;
}
.search input { flex: 1; margin: 6px 0 0 15px; color: #333; }
.search input::placeholder { color: #444; opacity: 1; }
.slot { display: grid; place-items: center; width: 58px; }
.ring { width: 20px; height: 20px; border: 3px solid #fff; border-radius: 50%; }
.pinned { display: flex; margin-left: 3px; }
.app { display: grid; place-items: center; position: relative; width: 61px; }
.app.running::after {
  content: "";
  position: absolute;
  bottom: 0;
  left: 6px;
  width: 50px;
  height: 3px;
  background: #8fdcbc;
}
.app.stacked::after { background: linear-gradient(90deg, #8fdcbc 38px, #3f6b66 38px, #3f6b66 39px, #6aa894 39px); }
.t-edge-old { width: 26px; height: 28px; }
.t-explorer { width: 28px; height: 24px; }
.t-store { width: 30px; height: 30px; }
.t-mail { width: 30px; height: 25px; }
.t-chrome-user { width: 32px; height: 32px; }
.t-word { width: 26px; height: 26px; }
.t-gear { width: 24px; height: 24px; }
.tray { display: flex; align-items: center; gap: 10px; margin-left: auto; }
.caret { width: 16px; height: 9px; }
.notices { position: relative; width: 20px; margin: 0 24px 0 102px; }
.notices b {
  position: absolute;
  left: 9px;
  top: 25px;
  width: 20px;
  height: 20px;
  border: 1px solid #8a8f9a;
  border-radius: 50%;
  background: #2a2d36;
  color: #fff;
  font-size: 14px;
  line-height: 18px;
}
.peek { width: 2px; margin-right: 2px; background: #7d879c; }

.side { display: flex; flex-direction: column; align-items: flex-end; justify-content: flex-end; }
.key {
  width: 25px;
  height: 14px;
  margin: 0 9px 31px 0;
  border: 2px solid #1c1c1e;
  border-radius: 7px;
  background: #5a5b5d;
}
.power {
  display: grid;
  place-items: center;
  width: 42px;
  height: 20px;
  margin: 6px 0 3px;
  border: 2px solid #1f1f21;
  border-right: 0;
  border-radius: 3px 0 0 3px;
  background: #4d4e50;
}
</style>
